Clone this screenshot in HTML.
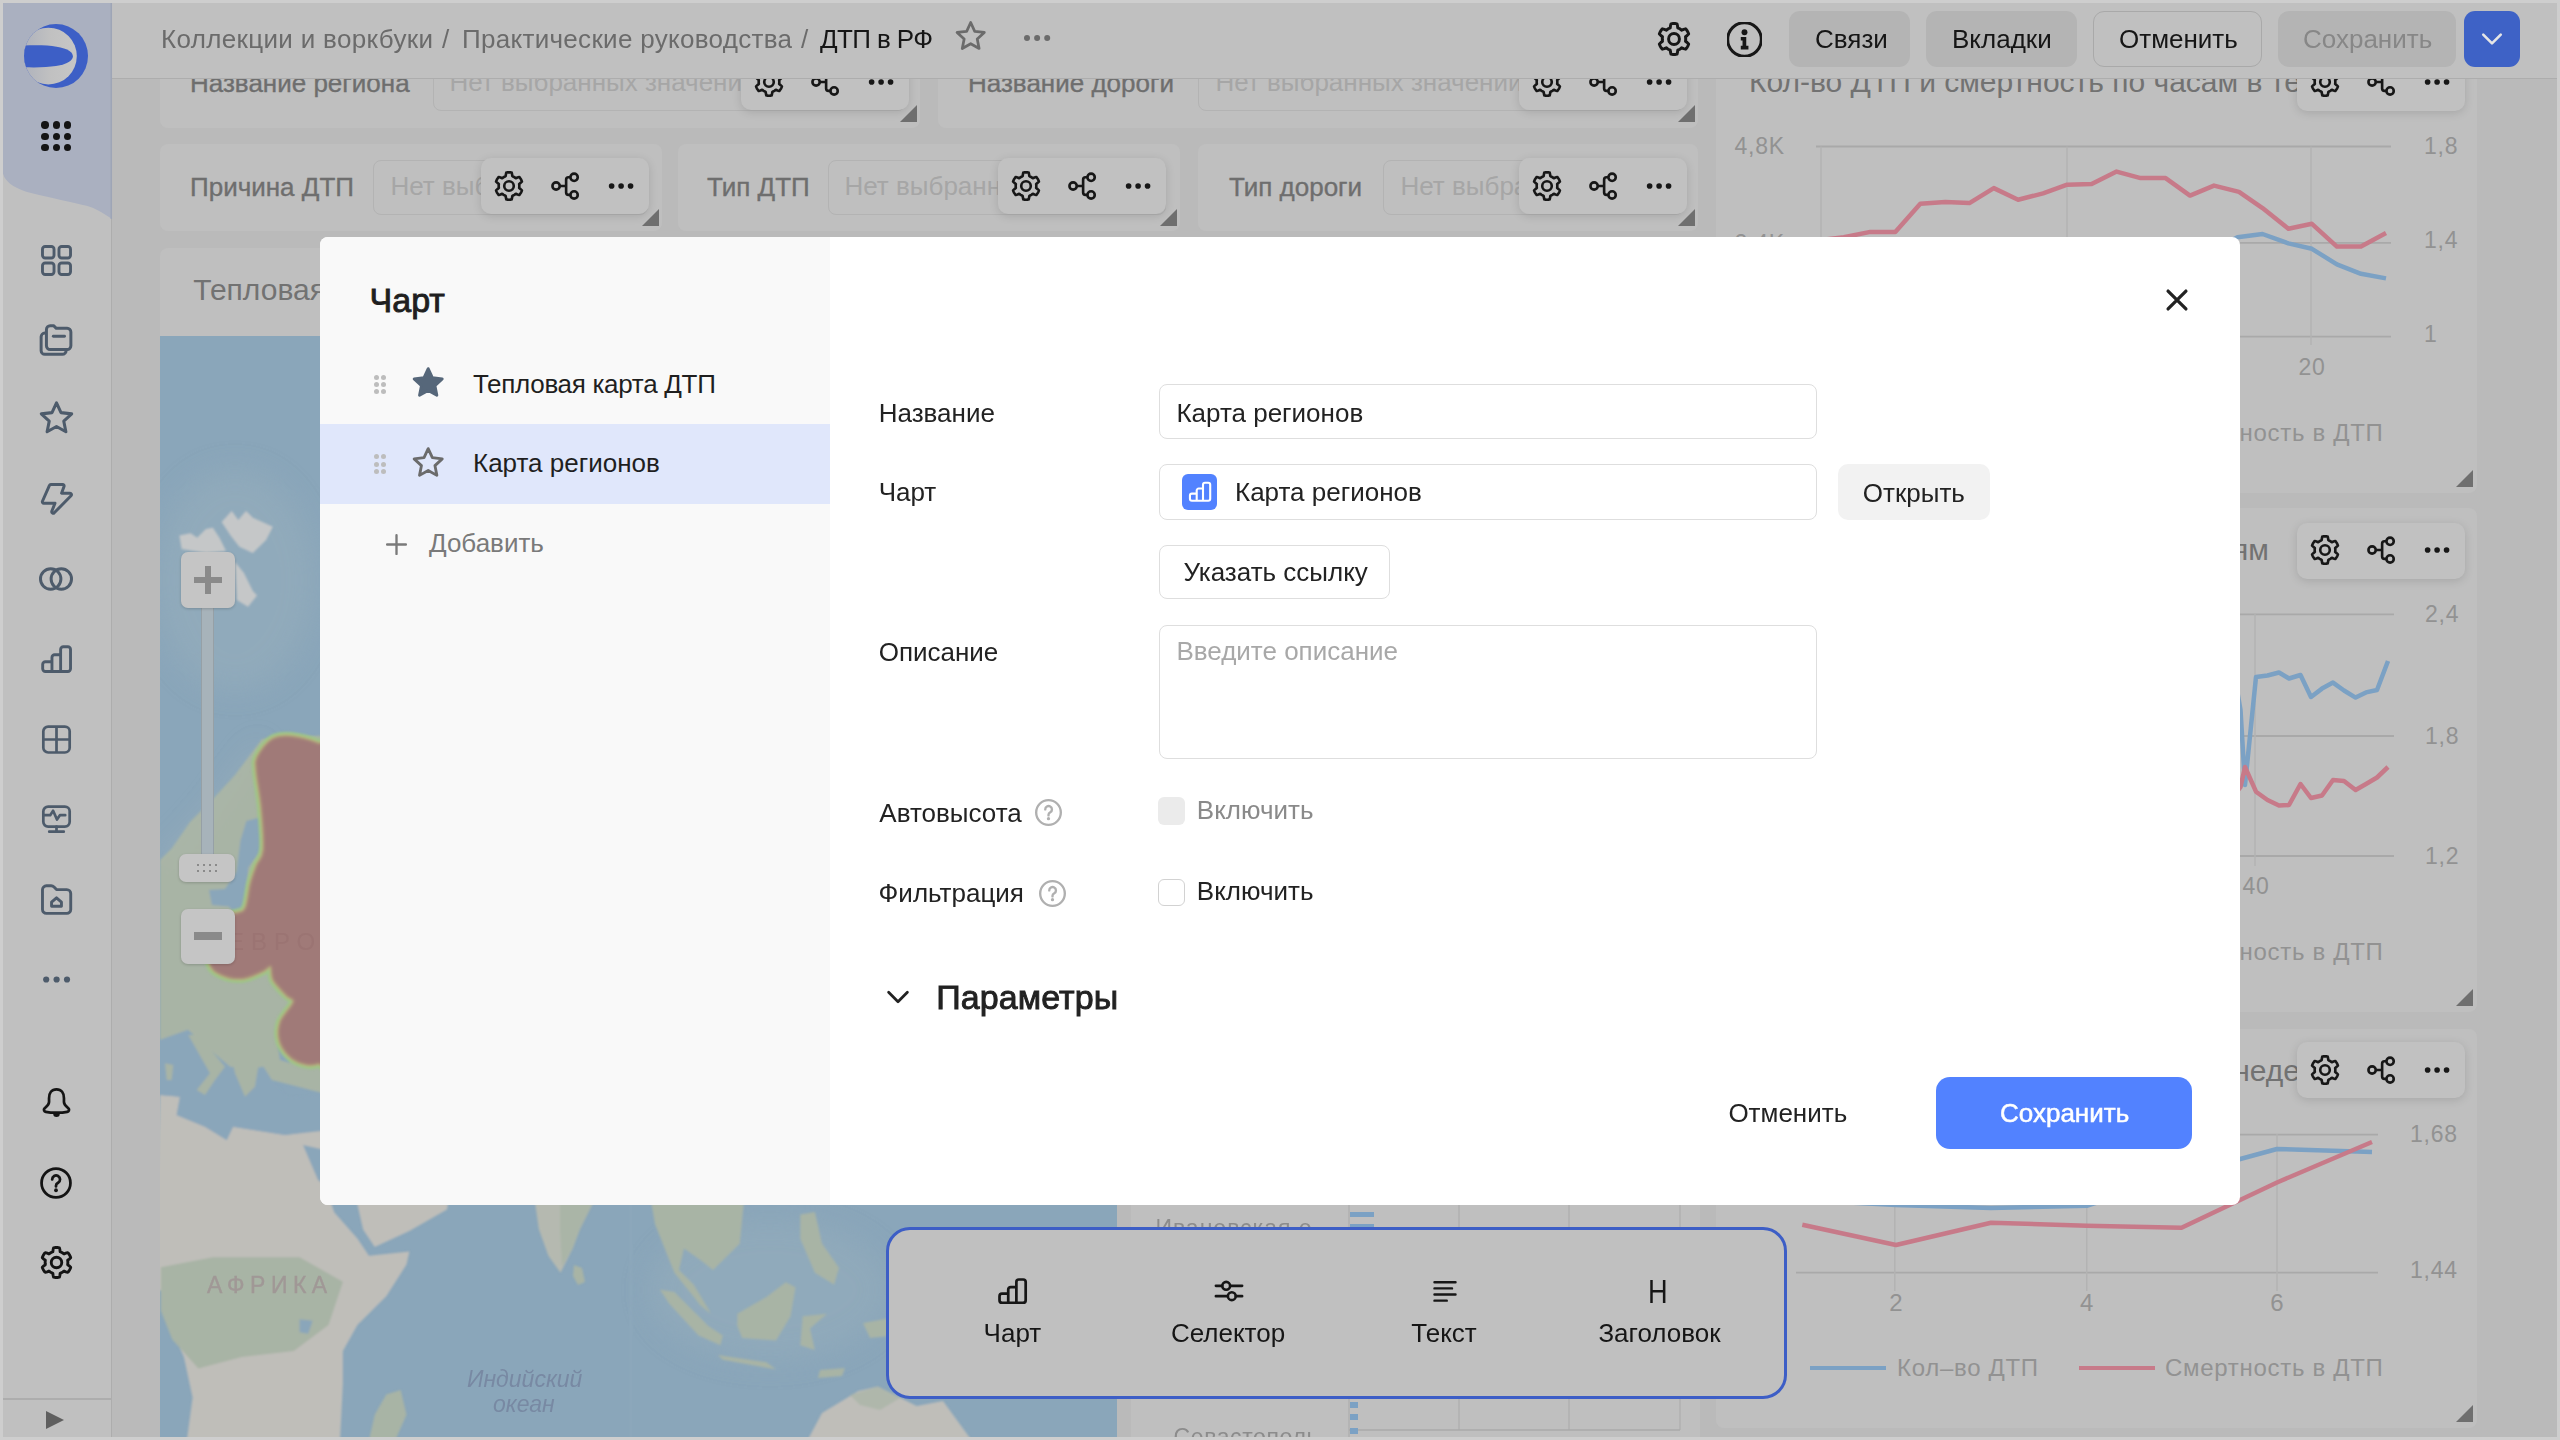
<!DOCTYPE html><html><head><meta charset="utf-8"><style>
*{box-sizing:border-box;margin:0;padding:0}
html,body{width:2560px;height:1440px;overflow:hidden;background:#cecece;font-family:"Liberation Sans",sans-serif}
.abs{position:absolute}
svg{display:block;overflow:visible}
.t{position:absolute;white-space:nowrap;line-height:1}
</style></head><body>
<svg width="0" height="0" style="position:absolute">
<defs>
<symbol id="gear" viewBox="0 0 32 32"><path d="M16.00 1.40 L16.95 1.43 L17.91 1.52 L18.84 1.74 L19.31 3.64 L19.55 5.53 L20.21 5.84 L20.87 6.13 L21.50 6.47 L22.11 6.85 L22.70 7.27 L23.29 7.69 L25.05 6.95 L26.93 6.41 L27.58 7.11 L28.14 7.89 L28.64 8.70 L29.09 9.54 L29.49 10.41 L29.77 11.33 L28.36 12.69 L26.84 13.84 L26.91 14.56 L26.98 15.28 L27.00 16.00 L26.98 16.72 L26.91 17.44 L26.84 18.16 L28.36 19.31 L29.77 20.67 L29.49 21.59 L29.09 22.46 L28.64 23.30 L28.14 24.11 L27.58 24.89 L26.93 25.59 L25.05 25.05 L23.29 24.31 L22.70 24.73 L22.11 25.15 L21.50 25.53 L20.87 25.87 L20.21 26.16 L19.55 26.47 L19.31 28.36 L18.84 30.26 L17.91 30.48 L16.95 30.57 L16.00 30.60 L15.05 30.57 L14.09 30.48 L13.16 30.26 L12.69 28.36 L12.45 26.47 L11.79 26.16 L11.13 25.87 L10.50 25.53 L9.89 25.15 L9.30 24.73 L8.71 24.31 L6.95 25.05 L5.07 25.59 L4.42 24.89 L3.86 24.11 L3.36 23.30 L2.91 22.46 L2.51 21.59 L2.23 20.67 L3.64 19.31 L5.16 18.16 L5.09 17.44 L5.02 16.72 L5.00 16.00 L5.02 15.28 L5.09 14.56 L5.16 13.84 L3.64 12.69 L2.23 11.33 L2.51 10.41 L2.91 9.54 L3.36 8.70 L3.86 7.89 L4.42 7.11 L5.07 6.41 L6.95 6.95 L8.71 7.69 L9.30 7.27 L9.89 6.85 L10.50 6.47 L11.13 6.13 L11.79 5.84 L12.45 5.53 L12.69 3.64 L13.16 1.74 L14.09 1.52 L15.05 1.43Z" fill="none" stroke="currentColor" stroke-width="2.8" stroke-linejoin="round"/><circle cx="16" cy="16" r="5.1" fill="none" stroke="currentColor" stroke-width="2.8"/></symbol>
<symbol id="share" viewBox="0 0 32 32"><circle cx="6.5" cy="16" r="3.9" fill="none" stroke="currentColor" stroke-width="2.8"/><circle cx="25.7" cy="6.7" r="3.9" fill="none" stroke="currentColor" stroke-width="2.8"/><circle cx="25.7" cy="25.5" r="3.9" fill="none" stroke="currentColor" stroke-width="2.8"/><path d="M10.4 16H17.2M21.8 6.7H19.7a2.5 2.5 0 0 0-2.5 2.5V23a2.5 2.5 0 0 0 2.5 2.5H21.8" fill="none" stroke="currentColor" stroke-width="2.8"/></symbol>
<symbol id="dots" viewBox="0 0 32 32"><circle cx="6" cy="16" r="3" fill="currentColor"/><circle cx="16.1" cy="16" r="3" fill="currentColor"/><circle cx="26.2" cy="16" r="3" fill="currentColor"/></symbol>
<symbol id="star" viewBox="0 0 32 32"><path d="M16.00 2.60 L20.11 11.54 L29.89 12.69 L22.66 19.36 L24.58 29.01 L16.00 24.20 L7.42 29.01 L9.34 19.36 L2.11 12.69 L11.89 11.54Z" fill="none" stroke="currentColor" stroke-width="2.8" stroke-linejoin="round"/></symbol>
<symbol id="starf" viewBox="0 0 32 32"><path d="M16.00 2.60 L20.11 11.54 L29.89 12.69 L22.66 19.36 L24.58 29.01 L16.00 24.20 L7.42 29.01 L9.34 19.36 L2.11 12.69 L11.89 11.54Z" fill="currentColor" stroke="currentColor" stroke-width="2.8" stroke-linejoin="round"/></symbol>
<symbol id="info" viewBox="0 0 32 32"><circle cx="16" cy="16" r="15.4" fill="none" stroke="currentColor" stroke-width="2.8"/><circle cx="16" cy="9.3" r="2.7" fill="currentColor"/><path d="M12.6 13.6H17.6V21.8H19.6V25.2H12.6V21.8H14.2V16.9H12.6Z" fill="currentColor"/></symbol>
<symbol id="chev" viewBox="0 0 32 32"><path d="M6 11L16 21L26 11" fill="none" stroke="currentColor" stroke-width="3" stroke-linecap="round" stroke-linejoin="round"/></symbol>
<symbol id="close" viewBox="0 0 32 32"><path d="M5 5L27 27M27 5L5 27" fill="none" stroke="currentColor" stroke-width="4" stroke-linecap="round"/></symbol>
<symbol id="plus" viewBox="0 0 32 32"><path d="M16 4V28M4 16H28" fill="none" stroke="currentColor" stroke-width="3" stroke-linecap="round"/></symbol>
<symbol id="help" viewBox="0 0 32 32"><circle cx="16" cy="16" r="13.6" fill="none" stroke="currentColor" stroke-width="2.6"/><path d="M12.4 12.6a3.7 3.7 0 1 1 5.6 3.2c-1.2.7-2 1.4-2 2.8v.6" fill="none" stroke="currentColor" stroke-width="2.6" stroke-linecap="round"/><circle cx="16" cy="22.8" r="1.8" fill="currentColor"/></symbol>
<symbol id="grid4" viewBox="0 0 32 32"><rect x="2.4" y="2.4" width="11.2" height="11.2" rx="2.6" fill="none" stroke="currentColor" stroke-width="2.8"/><rect x="18.4" y="2.4" width="11.2" height="11.2" rx="2.6" fill="none" stroke="currentColor" stroke-width="2.8"/><rect x="2.4" y="18.4" width="11.2" height="11.2" rx="2.6" fill="none" stroke="currentColor" stroke-width="2.8"/><rect x="18.4" y="18.4" width="11.2" height="11.2" rx="2.6" fill="none" stroke="currentColor" stroke-width="2.8"/></symbol>
<symbol id="folders" viewBox="0 0 32 32"><path d="M7 9.5H5.5a3.5 3.5 0 0 0-3.5 3.5V26a3.5 3.5 0 0 0 3.5 3.5H22a3.5 3.5 0 0 0 3.5-3.5V25" fill="none" stroke="currentColor" stroke-width="2.8" stroke-linejoin="round"/><path d="M7 6a3.5 3.5 0 0 1 3.5-3.5h3.2l2.6 2.5H26.5a3.5 3.5 0 0 1 3.5 3.5V21.5a3.5 3.5 0 0 1-3.5 3.5H10.5A3.5 3.5 0 0 1 7 21.5Z" fill="none" stroke="currentColor" stroke-width="2.8" stroke-linejoin="round"/><path d="M13.5 12.5H24" stroke="currentColor" stroke-width="2.8" stroke-linecap="round"/></symbol>
<symbol id="bolt" viewBox="0 0 32 32"><path d="M10.2 2.3H21.3a1.4 1.4 0 0 1 1.3 1.9L20.3 10.5H28.2a1.4 1.4 0 0 1 1 2.4L13.4 29a1.4 1.4 0 0 1-2.3-1.4L14.1 20H3.6a1.4 1.4 0 0 1-1.3-1.9L8.9 3.2a1.4 1.4 0 0 1 1.3-.9Z" fill="none" stroke="currentColor" stroke-width="2.8" stroke-linejoin="round"/></symbol>
<symbol id="circles" viewBox="0 0 32 32"><circle cx="11" cy="16" r="9.6" fill="none" stroke="currentColor" stroke-width="2.8"/><circle cx="21" cy="16" r="9.6" fill="none" stroke="currentColor" stroke-width="2.8"/></symbol>
<symbol id="bars" viewBox="0 0 32 32"><path d="M5.2 27.6H27a2.6 2.6 0 0 0 2.6-2.6V6.2a2.6 2.6 0 0 0-2.6-2.6H22.6a2.6 2.6 0 0 0-2.6 2.6V11.4H14.2a2.6 2.6 0 0 0-2.6 2.6V18.2H5.2a2.6 2.6 0 0 0-2.6 2.6V25a2.6 2.6 0 0 0 2.6 2.6Z M11.6 18.2V27.6 M20 11.4V27.6" fill="none" stroke="currentColor" stroke-width="2.8" stroke-linejoin="round"/></symbol>
<symbol id="table" viewBox="0 0 32 32"><rect x="2.4" y="2.6" width="27.2" height="26.8" rx="5" fill="none" stroke="currentColor" stroke-width="2.8"/><path d="M2.4 16H29.6M16 2.6V29.4" stroke="currentColor" stroke-width="2.8"/></symbol>
<symbol id="monitor" viewBox="0 0 32 32"><rect x="2.4" y="2.6" width="27.2" height="20.8" rx="5" fill="none" stroke="currentColor" stroke-width="2.8"/><path d="M3 11.5H9.5L12.5 7L16.5 16L19.5 11.5H25" fill="none" stroke="currentColor" stroke-width="2.8" stroke-linejoin="round" stroke-linecap="round"/><path d="M16 23.4V28.2M8.5 28.6H23.5" stroke="currentColor" stroke-width="2.8" stroke-linecap="round"/></symbol>
<symbol id="folderhome" viewBox="0 0 32 32"><path d="M2.4 6.5a3.8 3.8 0 0 1 3.8-3.8H10.8a4 4 0 0 1 2.8 1.2L16 6.4H26a3.8 3.8 0 0 1 3.8 3.8V25.7a3.8 3.8 0 0 1-3.8 3.8H6.2a3.8 3.8 0 0 1-3.8-3.8Z" fill="none" stroke="currentColor" stroke-width="2.8" stroke-linejoin="round"/><path d="M11.2 22.6V18.6L16 14.4L20.8 18.6V22.6Z" fill="none" stroke="currentColor" stroke-width="2.8" stroke-linejoin="round"/></symbol>
<symbol id="bell" viewBox="0 0 32 32"><path d="M16 2.5C10.8 2.5 8.3 6.3 8.3 11.5V15.5C8.3 18.5 6 20 3.6 22.2C2.4 23.4 3.2 25.3 4.9 25.6C8.4 26.3 12 26.5 16 26.5S23.6 26.3 27.1 25.6C28.8 25.3 29.6 23.4 28.4 22.2C26 20 23.7 18.5 23.7 15.5V11.5C23.7 6.3 21.2 2.5 16 2.5Z" fill="none" stroke="currentColor" stroke-width="2.8" stroke-linejoin="round"/><path d="M12.6 27.5a3.4 3.4 0 0 0 6.8 0Z" fill="currentColor"/></symbol>
<symbol id="sliders" viewBox="0 0 32 32"><path d="M2 10.5H8.8M17.2 10.5H30M2 21.5H14.8M23.2 21.5H30" stroke="currentColor" stroke-width="2.8" stroke-linecap="round"/><circle cx="13" cy="10.5" r="4.2" fill="none" stroke="currentColor" stroke-width="2.8"/><circle cx="19" cy="21.5" r="4.2" fill="none" stroke="currentColor" stroke-width="2.8"/></symbol>
<symbol id="lines" viewBox="0 0 32 32"><path d="M4 6H28M4 13H24M4 20H28M4 27H18" stroke="currentColor" stroke-width="2.8" stroke-linecap="round"/></symbol>
<symbol id="drag" viewBox="0 0 32 32"><circle cx="10" cy="5" r="2.6" fill="currentColor"/><circle cx="22" cy="5" r="2.6" fill="currentColor"/><circle cx="10" cy="16" r="2.6" fill="currentColor"/><circle cx="22" cy="16" r="2.6" fill="currentColor"/><circle cx="10" cy="27" r="2.6" fill="currentColor"/><circle cx="22" cy="27" r="2.6" fill="currentColor"/></symbol>
</defs></svg>
<div class="abs" style="left:3px;top:3px;width:2554px;height:1434px;background:#bababa"></div>
<div class="abs" style="left:160px;top:40px;width:760px;height:88px;background:#bfbfbf;border-radius:8px"></div>
<div class="t" style="left:190.0px;top:69.9px;font-size:26px;color:#6e6e6e;font-weight:400;-webkit-text-stroke:0.35px #6e6e6e">Название региона</div>
<div class="abs" style="left:433px;top:56px;width:473px;height:55px;border:1.5px solid #b3b3b3;border-radius:8px;overflow:hidden"><div class="t" style="left:15.5px;top:12.4px;font-size:26px;color:#a6a6a6">Нет выбранных значений</div></div>
<div class="abs" style="left:741px;top:54px;width:168px;height:56px;background:#c1c1c1;border-radius:10px;box-shadow:0 2px 10px rgba(0,0,0,0.13)"></div>
<svg class="abs" style="left:754.0px;top:66.5px;width:30px;height:30px;color:#171717" viewBox="0 0 32 32"><use href="#gear"/></svg>
<svg class="abs" style="left:810.0px;top:66.5px;width:30px;height:30px;color:#171717" viewBox="0 0 32 32"><use href="#share"/></svg>
<svg class="abs" style="left:866.0px;top:66.5px;width:30px;height:30px;color:#171717" viewBox="0 0 32 32"><use href="#dots"/></svg>
<svg class="abs" style="left:900px;top:105px;width:17px;height:17px" viewBox="0 0 17 17"><path d="M17 0V17H0Z" fill="#6f6f6f"/></svg>
<div class="abs" style="left:938px;top:40px;width:760px;height:88px;background:#bfbfbf;border-radius:8px"></div>
<div class="t" style="left:968.0px;top:69.9px;font-size:26px;color:#6e6e6e;font-weight:400;-webkit-text-stroke:0.35px #6e6e6e">Название дороги</div>
<div class="abs" style="left:1198px;top:56px;width:486px;height:55px;border:1.5px solid #b3b3b3;border-radius:8px;overflow:hidden"><div class="t" style="left:16.5px;top:12.4px;font-size:26px;color:#a6a6a6">Нет выбранных значений</div></div>
<div class="abs" style="left:1519px;top:54px;width:168px;height:56px;background:#c1c1c1;border-radius:10px;box-shadow:0 2px 10px rgba(0,0,0,0.13)"></div>
<svg class="abs" style="left:1532.0px;top:66.5px;width:30px;height:30px;color:#171717" viewBox="0 0 32 32"><use href="#gear"/></svg>
<svg class="abs" style="left:1588.0px;top:66.5px;width:30px;height:30px;color:#171717" viewBox="0 0 32 32"><use href="#share"/></svg>
<svg class="abs" style="left:1644.0px;top:66.5px;width:30px;height:30px;color:#171717" viewBox="0 0 32 32"><use href="#dots"/></svg>
<svg class="abs" style="left:1678px;top:105px;width:17px;height:17px" viewBox="0 0 17 17"><path d="M17 0V17H0Z" fill="#6f6f6f"/></svg>
<div class="abs" style="left:160px;top:144px;width:502px;height:87px;background:#bfbfbf;border-radius:8px"></div>
<div class="t" style="left:190.0px;top:173.9px;font-size:26px;color:#6e6e6e;font-weight:400;-webkit-text-stroke:0.35px #6e6e6e">Причина ДТП</div>
<div class="abs" style="left:373px;top:160px;width:275px;height:55px;border:1.5px solid #b3b3b3;border-radius:8px;overflow:hidden"><div class="t" style="left:16.5px;top:12.4px;font-size:26px;color:#a6a6a6">Нет выбранных значений</div></div>
<div class="abs" style="left:481px;top:158px;width:168px;height:56px;background:#c1c1c1;border-radius:10px;box-shadow:0 2px 10px rgba(0,0,0,0.13)"></div>
<svg class="abs" style="left:494.0px;top:170.5px;width:30px;height:30px;color:#171717" viewBox="0 0 32 32"><use href="#gear"/></svg>
<svg class="abs" style="left:550.0px;top:170.5px;width:30px;height:30px;color:#171717" viewBox="0 0 32 32"><use href="#share"/></svg>
<svg class="abs" style="left:606.0px;top:170.5px;width:30px;height:30px;color:#171717" viewBox="0 0 32 32"><use href="#dots"/></svg>
<svg class="abs" style="left:642px;top:209px;width:17px;height:17px" viewBox="0 0 17 17"><path d="M17 0V17H0Z" fill="#6f6f6f"/></svg>
<div class="abs" style="left:678px;top:144px;width:502px;height:87px;background:#bfbfbf;border-radius:8px"></div>
<div class="t" style="left:707.0px;top:173.9px;font-size:26px;color:#6e6e6e;font-weight:400;-webkit-text-stroke:0.35px #6e6e6e">Тип ДТП</div>
<div class="abs" style="left:828px;top:160px;width:338px;height:55px;border:1.5px solid #b3b3b3;border-radius:8px;overflow:hidden"><div class="t" style="left:15.5px;top:12.4px;font-size:26px;color:#a6a6a6">Нет выбранных значений</div></div>
<div class="abs" style="left:998px;top:158px;width:168px;height:56px;background:#c1c1c1;border-radius:10px;box-shadow:0 2px 10px rgba(0,0,0,0.13)"></div>
<svg class="abs" style="left:1011.0px;top:170.5px;width:30px;height:30px;color:#171717" viewBox="0 0 32 32"><use href="#gear"/></svg>
<svg class="abs" style="left:1067.0px;top:170.5px;width:30px;height:30px;color:#171717" viewBox="0 0 32 32"><use href="#share"/></svg>
<svg class="abs" style="left:1123.0px;top:170.5px;width:30px;height:30px;color:#171717" viewBox="0 0 32 32"><use href="#dots"/></svg>
<svg class="abs" style="left:1160px;top:209px;width:17px;height:17px" viewBox="0 0 17 17"><path d="M17 0V17H0Z" fill="#6f6f6f"/></svg>
<div class="abs" style="left:1198px;top:144px;width:500px;height:87px;background:#bfbfbf;border-radius:8px"></div>
<div class="t" style="left:1229.0px;top:173.9px;font-size:26px;color:#6e6e6e;font-weight:400;-webkit-text-stroke:0.35px #6e6e6e">Тип дороги</div>
<div class="abs" style="left:1383px;top:160px;width:301px;height:55px;border:1.5px solid #b3b3b3;border-radius:8px;overflow:hidden"><div class="t" style="left:16.5px;top:12.4px;font-size:26px;color:#a6a6a6">Нет выбранных значений</div></div>
<div class="abs" style="left:1519px;top:158px;width:168px;height:56px;background:#c1c1c1;border-radius:10px;box-shadow:0 2px 10px rgba(0,0,0,0.13)"></div>
<svg class="abs" style="left:1532.0px;top:170.5px;width:30px;height:30px;color:#171717" viewBox="0 0 32 32"><use href="#gear"/></svg>
<svg class="abs" style="left:1588.0px;top:170.5px;width:30px;height:30px;color:#171717" viewBox="0 0 32 32"><use href="#share"/></svg>
<svg class="abs" style="left:1644.0px;top:170.5px;width:30px;height:30px;color:#171717" viewBox="0 0 32 32"><use href="#dots"/></svg>
<svg class="abs" style="left:1678px;top:209px;width:17px;height:17px" viewBox="0 0 17 17"><path d="M17 0V17H0Z" fill="#6f6f6f"/></svg>
<div class="abs" style="left:1716px;top:40px;width:761px;height:453px;background:#bfbfbf;border-radius:8px"></div>
<svg class="abs" style="left:2456px;top:470px;width:17px;height:17px" viewBox="0 0 17 17"><path d="M17 0V17H0Z" fill="#6f6f6f"/></svg>
<div class="t" style="left:1749.0px;top:67.0px;font-size:30px;color:#727272;font-weight:400;">Кол-во ДТП и смертность по часам в течение суток</div>
<div class="abs" style="left:2297px;top:54.6px;width:168px;height:55.99999999999999px;background:#c1c1c1;border-radius:10px;box-shadow:0 2px 10px rgba(0,0,0,0.13)"></div>
<svg class="abs" style="left:2310.0px;top:67.1px;width:30px;height:30px;color:#171717" viewBox="0 0 32 32"><use href="#gear"/></svg>
<svg class="abs" style="left:2366.0px;top:67.1px;width:30px;height:30px;color:#171717" viewBox="0 0 32 32"><use href="#share"/></svg>
<svg class="abs" style="left:2422.0px;top:67.1px;width:30px;height:30px;color:#171717" viewBox="0 0 32 32"><use href="#dots"/></svg>
<div class="abs" style="left:1716px;top:508px;width:761px;height:504px;background:#bfbfbf;border-radius:8px"></div>
<svg class="abs" style="left:2456px;top:989px;width:17px;height:17px" viewBox="0 0 17 17"><path d="M17 0V17H0Z" fill="#6f6f6f"/></svg>
<div class="t" style="right:291.0px;top:534.5px;font-size:30px;color:#727272;font-weight:400;">Кол-во ДТП и смертность по дням</div>
<div class="abs" style="left:1716px;top:1029px;width:761px;height:399px;background:#bfbfbf;border-radius:8px"></div>
<svg class="abs" style="left:2456px;top:1405px;width:17px;height:17px" viewBox="0 0 17 17"><path d="M17 0V17H0Z" fill="#6f6f6f"/></svg>
<div class="t" style="right:260.0px;top:1055.5px;font-size:30px;color:#727272;font-weight:400;">Кол-во ДТП и смертность по дням неде</div>
<svg class="abs" style="left:0;top:0;width:2560px;height:1440px" viewBox="0 0 2560 1440">
<path d="M1816 146.5H2391" stroke="#a9a9a9" stroke-width="1.8"/>
<path d="M1816 242.8H2391" stroke="#a9a9a9" stroke-width="1.8"/>
<path d="M1816 336.6H2391" stroke="#a9a9a9" stroke-width="1.8"/>
<path d="M1821 146.5V345" stroke="#b3b3b3" stroke-width="1.5"/>
<path d="M2067 146.5V345" stroke="#b3b3b3" stroke-width="1.5"/>
<path d="M2311 146.5V345" stroke="#b3b3b3" stroke-width="1.5"/>
<path d="M2213.0 250.0 L2237.5 237.2 L2262.5 234.0 L2288.4 243.4 L2311.9 248.8 L2336.9 264.4 L2361.0 273.8 L2386.0 278.4" fill="none" stroke="#7ba1c4" stroke-width="4.5" stroke-linejoin="round"/>
<path d="M1821.0 240.0 L1843.8 237.2 L1870.3 231.9 L1895.3 231.9 L1920.3 203.8 L1945.3 201.9 L1969.4 203.1 L1993.8 188.1 L2018.1 199.7 L2043.1 193.4 L2067.2 184.7 L2091.6 184.1 L2116.6 171.6 L2140.6 178.1 L2165.6 178.1 L2190.0 195.6 L2214.0 185.6 L2239.0 191.9 L2262.5 208.1 L2288.4 228.8 L2311.9 223.8 L2336.9 246.6 L2361.0 246.6 L2386.0 233.1" fill="none" stroke="#c77a89" stroke-width="4.5" stroke-linejoin="round"/>
<path d="M1796 614.4H2394" stroke="#a9a9a9" stroke-width="1.8"/>
<path d="M1796 736H2394" stroke="#a9a9a9" stroke-width="1.8"/>
<path d="M1796 856H2394" stroke="#a9a9a9" stroke-width="1.8"/>
<path d="M2255 614V866" stroke="#b3b3b3" stroke-width="1.5"/>
<path d="M2230.0 650.0 L2240.5 710.0 L2245.0 785.0 L2256.0 677.0 L2267.5 675.5 L2279.0 672.5 L2289.0 678.5 L2300.5 675.0 L2311.0 697.0 L2322.0 688.6 L2333.0 682.6 L2344.0 690.5 L2355.6 697.6 L2366.0 692.4 L2377.0 690.0 L2388.0 661.0" fill="none" stroke="#7ba1c4" stroke-width="4.5" stroke-linejoin="round"/>
<path d="M2230.0 800.0 L2240.5 787.0 L2245.0 767.0 L2256.0 791.7 L2267.5 800.0 L2279.0 805.6 L2289.0 805.0 L2300.5 784.0 L2311.0 798.0 L2322.0 795.5 L2333.0 780.0 L2344.0 781.0 L2355.6 790.0 L2366.0 784.0 L2377.0 777.5 L2388.0 767.0" fill="none" stroke="#c77a89" stroke-width="4.5" stroke-linejoin="round"/>
<path d="M1796 1134.6H2378" stroke="#a9a9a9" stroke-width="1.8"/>
<path d="M1796 1272.6H2378" stroke="#a9a9a9" stroke-width="1.8"/>
<path d="M1894.8 1134V1291" stroke="#b3b3b3" stroke-width="1.5"/>
<path d="M2086.7 1134V1291" stroke="#b3b3b3" stroke-width="1.5"/>
<path d="M2277 1134V1291" stroke="#b3b3b3" stroke-width="1.5"/>
<path d="M1802.0 1200.0 L1896.0 1205.0 L1991.0 1208.0 L2086.7 1205.8 L2181.5 1175.0 L2277.0 1149.0 L2372.0 1152.0" fill="none" stroke="#7ba1c4" stroke-width="4.5" stroke-linejoin="round"/>
<path d="M1802.3 1224.8 L1896.0 1245.0 L1991.0 1222.7 L2086.7 1225.7 L2181.5 1227.7 L2277.0 1182.5 L2372.0 1142.0" fill="none" stroke="#c77a89" stroke-width="4.5" stroke-linejoin="round"/>
</svg>
<div class="abs" style="left:2297px;top:522.5px;width:168px;height:56.0px;background:#c1c1c1;border-radius:10px;box-shadow:0 2px 10px rgba(0,0,0,0.13)"></div>
<svg class="abs" style="left:2310.0px;top:535.0px;width:30px;height:30px;color:#171717" viewBox="0 0 32 32"><use href="#gear"/></svg>
<svg class="abs" style="left:2366.0px;top:535.0px;width:30px;height:30px;color:#171717" viewBox="0 0 32 32"><use href="#share"/></svg>
<svg class="abs" style="left:2422.0px;top:535.0px;width:30px;height:30px;color:#171717" viewBox="0 0 32 32"><use href="#dots"/></svg>
<div class="abs" style="left:2297px;top:1042px;width:168px;height:56px;background:#c1c1c1;border-radius:10px;box-shadow:0 2px 10px rgba(0,0,0,0.13)"></div>
<svg class="abs" style="left:2310.0px;top:1054.5px;width:30px;height:30px;color:#171717" viewBox="0 0 32 32"><use href="#gear"/></svg>
<svg class="abs" style="left:2366.0px;top:1054.5px;width:30px;height:30px;color:#171717" viewBox="0 0 32 32"><use href="#share"/></svg>
<svg class="abs" style="left:2422.0px;top:1054.5px;width:30px;height:30px;color:#171717" viewBox="0 0 32 32"><use href="#dots"/></svg>
<div class="t" style="right:775.0px;top:135.2px;font-size:23px;color:#929292;font-weight:400;letter-spacing:0.8px">4,8K</div>
<div class="t" style="right:775.0px;top:231.6px;font-size:23px;color:#929292;font-weight:400;letter-spacing:0.8px">2,4K</div>
<div class="t" style="left:2424.0px;top:135.2px;font-size:23px;color:#929292;font-weight:400;letter-spacing:0.8px">1,8</div>
<div class="t" style="left:2424.0px;top:228.8px;font-size:23px;color:#929292;font-weight:400;letter-spacing:0.8px">1,4</div>
<div class="t" style="left:2424.0px;top:322.8px;font-size:23px;color:#929292;font-weight:400;letter-spacing:0.8px">1</div>
<div class="t" style="left:2012.0px;width:600px;text-align:center;top:355.9px;font-size:23px;color:#929292;font-weight:400;letter-spacing:0.8px">20</div>
<div class="abs" style="left:1810px;top:430.5px;width:76px;height:4.0px;background:#7ba1c4"></div>
<div class="t" style="left:1897.0px;top:420.6px;font-size:24px;color:#929292;font-weight:400;letter-spacing:0.7px">Кол–во ДТП</div>
<div class="abs" style="left:2079px;top:430.5px;width:76px;height:4.0px;background:#c77a89"></div>
<div class="t" style="left:2165.0px;top:420.6px;font-size:24px;color:#929292;font-weight:400;letter-spacing:0.7px">Смертность в ДТП</div>
<div class="t" style="left:2425.0px;top:603.1px;font-size:23px;color:#929292;font-weight:400;letter-spacing:0.8px">2,4</div>
<div class="t" style="left:2425.0px;top:724.8px;font-size:23px;color:#929292;font-weight:400;letter-spacing:0.8px">1,8</div>
<div class="t" style="left:2425.0px;top:844.8px;font-size:23px;color:#929292;font-weight:400;letter-spacing:0.8px">1,2</div>
<div class="t" style="left:1956.0px;width:600px;text-align:center;top:875.0px;font-size:23px;color:#929292;font-weight:400;letter-spacing:0.8px">40</div>
<div class="abs" style="left:1810px;top:949.5px;width:76px;height:4.0px;background:#7ba1c4"></div>
<div class="t" style="left:1897.0px;top:939.6px;font-size:24px;color:#929292;font-weight:400;letter-spacing:0.7px">Кол–во ДТП</div>
<div class="abs" style="left:2079px;top:949.5px;width:76px;height:4.0px;background:#c77a89"></div>
<div class="t" style="left:2165.0px;top:939.6px;font-size:24px;color:#929292;font-weight:400;letter-spacing:0.7px">Смертность в ДТП</div>
<div class="t" style="left:2410.0px;top:1123.3px;font-size:23px;color:#929292;font-weight:400;letter-spacing:0.8px">1,68</div>
<div class="t" style="left:2410.0px;top:1258.8px;font-size:23px;color:#929292;font-weight:400;letter-spacing:0.8px">1,44</div>
<div class="t" style="left:1596.0px;width:600px;text-align:center;top:1290.6px;font-size:24px;color:#929292;font-weight:400;">2</div>
<div class="t" style="left:1786.7px;width:600px;text-align:center;top:1290.6px;font-size:24px;color:#929292;font-weight:400;">4</div>
<div class="t" style="left:1977.0px;width:600px;text-align:center;top:1290.6px;font-size:24px;color:#929292;font-weight:400;">6</div>
<div class="abs" style="left:1810px;top:1365.5px;width:76px;height:4.0px;background:#7ba1c4"></div>
<div class="t" style="left:1897.0px;top:1355.6px;font-size:24px;color:#929292;font-weight:400;letter-spacing:0.7px">Кол–во ДТП</div>
<div class="abs" style="left:2079px;top:1365.5px;width:76px;height:4.0px;background:#c77a89"></div>
<div class="t" style="left:2165.0px;top:1355.6px;font-size:24px;color:#929292;font-weight:400;letter-spacing:0.7px">Смертность в ДТП</div>
<div class="abs" style="left:160px;top:248px;width:957px;height:1212px;background:#bfbfbf;border-radius:8px"></div>
<div class="t" style="left:193.3px;top:274.9px;font-size:30px;color:#727272;font-weight:400;">Тепловая карта ДТП</div>
<div class="abs" style="left:160px;top:336px;width:957px;height:1101px;overflow:hidden">
<svg class="abs" style="left:-160px;top:-336px;width:2560px;height:1440px" viewBox="0 0 2560 1440">
<defs><filter id="bl" x="-5%" y="-5%" width="110%" height="110%"><feGaussianBlur stdDeviation="0.9"/></filter>
<filter id="bl2" x="-60%" y="-60%" width="220%" height="220%"><feGaussianBlur stdDeviation="14"/></filter></defs>
<rect x="0" y="0" width="2560" height="1440" fill="#8aa6ba"/>
<g filter="url(#bl)">
<ellipse cx="235" cy="580" rx="80" ry="110" fill="#95adbc" opacity="0.6" filter="url(#bl2)"/>
<path d="M221.7 522.0 L231.7 511.0 L238.3 520.0 L246.0 511.0 L252.8 517.8 L272.8 526.7 L266.0 540.0 L252.8 553.0 L239.4 546.7 L230.6 535.6Z" fill="#c5c7c8"/>
<path d="M179.4 535.6 L190.6 533.3 L197.2 537.8 L206.0 528.9 L212.8 527.8 L219.4 537.8 L226.0 551.0 L206.0 553.0 L181.7 549.0Z" fill="#c5c7c8"/>
<path d="M235.0 562.0 L243.9 573.0 L252.8 591.0 L257.0 595.6 L248.0 606.7 L237.0 600.0Z" fill="#c5c7c8"/>
<path d="M262.0 739.0 L330.0 735.0 L330.0 1095.0 L271.7 1080.0 L263.3 1066.7 L248.3 1070.0 L230.0 1066.7 L210.0 1050.0 L188.0 1030.0 L160.0 1040.0 L160.0 860.0 L172.0 848.0 L190.0 822.0 L212.0 800.0 L235.0 775.0 L250.0 755.0Z" fill="#a8b4a5"/>
<path d="M260.0 739.4 L263.9 745.3 L248.3 770.5 L228.9 797.8 L205.5 828.9 L193.9 840.5 L178.3 860.0 L166.7 867.7 L162.8 856.1 L184.2 836.6 L213.3 803.6 L236.6 770.5Z" fill="#b6bdb7" opacity="0.35" filter="url(#bl2)"/>
<path d="M246.4 821.0 L262.0 817.0 L263.9 828.9 L260.0 852.0 L248.3 867.7 L246.4 895.0 L248.3 914.4 L236.6 916.3 L228.9 906.6 L212.0 905.0 L209.0 890.0 L225.0 889.0 L236.6 871.6 L240.5 840.5Z" fill="#8aa6ba"/>
<path d="M278.0 1046.0 L292.0 1050.0 L290.0 1063.0 L280.0 1060.0Z" fill="#8aa6ba"/>
<path d="M160.0 1095.0 L180.0 1096.7 L176.7 1115.0 L205.0 1126.7 L226.7 1140.0 L233.0 1126.7 L285.0 1135.0 L320.0 1130.0 L340.0 1130.0 L328.5 1195.0 L334.2 1212.3 L357.4 1238.4 L368.9 1255.7 L409.4 1251.4 L406.5 1264.4 L386.3 1296.2 L357.4 1325.1 L342.9 1351.1 L342.9 1382.9 L340.0 1440.7 L186.8 1440.7 L192.6 1397.4 L183.9 1356.9 L169.5 1325.1 L172.3 1299.1 L160.2 1290.4 L155.0 1290.4Z" fill="#bfbeb9"/>
<path d="M160.0 1040.0 L188.0 1030.0 L210.0 1050.0 L230.0 1066.7 L248.3 1070.0 L263.3 1066.7 L271.7 1080.0 L288.3 1096.7 L330.0 1095.0 L330.0 1130.0 L285.0 1135.0 L233.0 1126.7 L226.7 1140.0 L205.0 1126.7 L176.7 1115.0 L180.0 1096.7 L160.0 1095.0Z" fill="#8aa6ba"/>
<path d="M188.3 1035.0 L198.3 1035.0 L225.0 1066.7 L215.0 1080.0 L205.0 1095.0 L196.7 1090.0 L210.0 1073.3Z" fill="#a8b4a5"/>
<path d="M231.7 1058.3 L258.3 1066.7 L255.0 1086.7 L245.0 1096.7 L235.0 1073.3Z" fill="#a8b4a5"/>
<path d="M165.0 1063.3 L173.3 1065.0 L171.7 1080.0 L166.7 1080.0Z" fill="#a8b4a5"/>
<path d="M303.0 1145.0 L325.0 1150.0 L325.0 1185.0 L318.0 1180.0Z" fill="#8aa6ba"/>
<path d="M160.8 1267.3 L212.8 1257.2 L299.6 1257.2 L342.9 1281.7 L328.5 1325.1 L293.8 1351.1 L241.7 1356.9 L198.4 1368.5 L172.3 1339.6 L160.8 1310.6Z" fill="#a8b4a5"/>
<path d="M299.6 1319.3 L312.6 1320.8 L308.2 1333.8 L299.6 1332.3Z" fill="#8aa6ba"/>
<path d="M354.5 1192.1 L449.9 1192.1 L447.0 1209.5 L409.4 1231.1 L374.7 1247.0 L363.2 1229.7Z" fill="#bfbeb9"/>
<path d="M386.3 1394.5 L400.7 1390.1 L406.5 1414.7 L395.0 1440.7 L368.9 1440.7 L374.7 1414.7Z" fill="#a8b4a5"/>
<path d="M534.0 1195.0 L597.0 1195.0 L580.0 1229.0 L572.7 1248.4 L560.5 1272.7 L548.4 1255.7 L538.8 1229.0Z" fill="#b5b9b0"/>
<path d="M560.0 1195.0 L597.0 1195.0 L580.0 1229.0 L572.7 1248.4 L562.0 1266.0 L560.0 1230.0Z" fill="#a8b4a5" opacity="0.8"/>
<path d="M574.0 1265.0 L582.0 1268.0 L585.0 1282.0 L578.0 1285.0 L573.0 1276.0Z" fill="#a8b4a5"/>
<ellipse cx="770" cy="1290" rx="120" ry="70" fill="#95adbc" opacity="0.55" filter="url(#bl2)"/>
<path d="M650.0 1195.0 L744.6 1195.0 L739.8 1243.6 L713.0 1270.0 L701.0 1260.5 L684.0 1248.4 L679.0 1270.0 L693.8 1284.8 L708.3 1309.0 L710.7 1313.8 L700.0 1305.0 L693.8 1296.9 L674.4 1272.7 L655.0 1224.2Z" fill="#a8b4a5"/>
<path d="M659.8 1289.6 L674.4 1292.0 L708.3 1326.0 L722.8 1335.6 L720.4 1345.3 L698.6 1335.6 L669.5 1304.0Z" fill="#a8b4a5"/>
<path d="M718.0 1355.0 L766.4 1362.3 L776.0 1369.5 L722.8 1359.8Z" fill="#a8b4a5"/>
<path d="M737.3 1313.8 L766.4 1296.9 L785.8 1282.3 L795.5 1287.2 L790.6 1316.3 L776.0 1340.5 L742.2 1338.0 L737.3 1326.0Z" fill="#a8b4a5"/>
<path d="M802.7 1316.3 L827.0 1313.8 L810.0 1328.4 L814.9 1350.0 L800.3 1345.3Z" fill="#a8b4a5"/>
<path d="M800.3 1214.5 L814.9 1212.0 L822.0 1243.6 L839.0 1267.8 L834.2 1284.8 L814.9 1272.7 L800.3 1238.8Z" fill="#a8b4a5"/>
<path d="M863.0 1323.0 L890.0 1318.0 L900.0 1335.0 L870.0 1338.0Z" fill="#a8b4a5"/>
<path d="M820.0 1370.0 L845.0 1368.0 L842.0 1376.0 L818.0 1378.0Z" fill="#a8b4a5"/>
<path d="M805.0 1445.0 L822.0 1413.0 L858.4 1391.0 L877.8 1386.5 L916.6 1406.0 L943.0 1401.0 L975.0 1445.0Z" fill="#bfbeb9"/>
<path d="M850.0 1395.0 L877.8 1386.5 L900.0 1398.0 L880.0 1410.0 L860.0 1405.0Z" fill="#a8b4a5" opacity="0.7"/>
<path d="M630.8 1195V1440" stroke="rgba(255,255,255,0.07)" stroke-width="1"/>
</g>
<g filter="url(#bl)"><path d="M258.0 757.0 C260.5 751.7 266.5 743.3 272.0 740.0 C277.5 736.7 283.3 736.3 291.0 737.0 C298.7 737.7 309.0 740.2 318.0 744.0 C327.0 747.8 340.5 709.0 345.0 760.0 C349.5 811.0 349.5 999.5 345.0 1050.0 C340.5 1100.5 325.0 1060.8 318.0 1063.0 C311.0 1065.2 307.8 1064.3 303.0 1063.0 C298.2 1061.7 292.8 1058.8 289.0 1055.0 C285.2 1051.2 281.3 1045.5 280.0 1040.0 C278.7 1034.5 278.7 1028.3 281.0 1022.0 C283.3 1015.7 293.0 1006.5 294.0 1002.0 C295.0 997.5 290.3 998.7 287.0 995.0 C283.7 991.3 276.7 984.8 274.0 980.0 C271.3 975.2 273.0 967.5 271.0 966.0 C269.0 964.5 266.8 969.0 262.0 971.0 C257.2 973.0 248.8 977.5 242.0 978.0 C235.2 978.5 226.3 976.5 221.0 974.0 C215.7 971.5 212.0 969.5 210.0 963.0 C208.0 956.5 208.5 942.5 209.0 935.0 C209.5 927.5 208.5 921.5 213.0 918.0 C217.5 914.5 230.5 915.7 236.0 914.0 C241.5 912.3 243.5 913.0 246.0 908.0 C248.5 903.0 249.2 891.0 251.0 884.0 C252.8 877.0 254.8 871.7 257.0 866.0 C259.2 860.3 263.2 859.7 264.0 850.0 C264.8 840.3 263.2 821.0 262.0 808.0 C260.8 795.0 257.7 780.5 257.0 772.0 C256.3 763.5 255.5 762.3 258.0 757.0Z" fill="#a07a78" stroke="#9ec488" stroke-width="10" stroke-linejoin="round"/>
<path d="M258.0 757.0 C260.5 751.7 266.5 743.3 272.0 740.0 C277.5 736.7 283.3 736.3 291.0 737.0 C298.7 737.7 309.0 740.2 318.0 744.0 C327.0 747.8 340.5 709.0 345.0 760.0 C349.5 811.0 349.5 999.5 345.0 1050.0 C340.5 1100.5 325.0 1060.8 318.0 1063.0 C311.0 1065.2 307.8 1064.3 303.0 1063.0 C298.2 1061.7 292.8 1058.8 289.0 1055.0 C285.2 1051.2 281.3 1045.5 280.0 1040.0 C278.7 1034.5 278.7 1028.3 281.0 1022.0 C283.3 1015.7 293.0 1006.5 294.0 1002.0 C295.0 997.5 290.3 998.7 287.0 995.0 C283.7 991.3 276.7 984.8 274.0 980.0 C271.3 975.2 273.0 967.5 271.0 966.0 C269.0 964.5 266.8 969.0 262.0 971.0 C257.2 973.0 248.8 977.5 242.0 978.0 C235.2 978.5 226.3 976.5 221.0 974.0 C215.7 971.5 212.0 969.5 210.0 963.0 C208.0 956.5 208.5 942.5 209.0 935.0 C209.5 927.5 208.5 921.5 213.0 918.0 C217.5 914.5 230.5 915.7 236.0 914.0 C241.5 912.3 243.5 913.0 246.0 908.0 C248.5 903.0 249.2 891.0 251.0 884.0 C252.8 877.0 254.8 871.7 257.0 866.0 C259.2 860.3 263.2 859.7 264.0 850.0 C264.8 840.3 263.2 821.0 262.0 808.0 C260.8 795.0 257.7 780.5 257.0 772.0 C256.3 763.5 255.5 762.3 258.0 757.0Z" fill="#a07a78" stroke="#b4b27c" stroke-width="5" stroke-linejoin="round"/>
<path d="M258.0 757.0 C260.5 751.7 266.5 743.3 272.0 740.0 C277.5 736.7 283.3 736.3 291.0 737.0 C298.7 737.7 309.0 740.2 318.0 744.0 C327.0 747.8 340.5 709.0 345.0 760.0 C349.5 811.0 349.5 999.5 345.0 1050.0 C340.5 1100.5 325.0 1060.8 318.0 1063.0 C311.0 1065.2 307.8 1064.3 303.0 1063.0 C298.2 1061.7 292.8 1058.8 289.0 1055.0 C285.2 1051.2 281.3 1045.5 280.0 1040.0 C278.7 1034.5 278.7 1028.3 281.0 1022.0 C283.3 1015.7 293.0 1006.5 294.0 1002.0 C295.0 997.5 290.3 998.7 287.0 995.0 C283.7 991.3 276.7 984.8 274.0 980.0 C271.3 975.2 273.0 967.5 271.0 966.0 C269.0 964.5 266.8 969.0 262.0 971.0 C257.2 973.0 248.8 977.5 242.0 978.0 C235.2 978.5 226.3 976.5 221.0 974.0 C215.7 971.5 212.0 969.5 210.0 963.0 C208.0 956.5 208.5 942.5 209.0 935.0 C209.5 927.5 208.5 921.5 213.0 918.0 C217.5 914.5 230.5 915.7 236.0 914.0 C241.5 912.3 243.5 913.0 246.0 908.0 C248.5 903.0 249.2 891.0 251.0 884.0 C252.8 877.0 254.8 871.7 257.0 866.0 C259.2 860.3 263.2 859.7 264.0 850.0 C264.8 840.3 263.2 821.0 262.0 808.0 C260.8 795.0 257.7 780.5 257.0 772.0 C256.3 763.5 255.5 762.3 258.0 757.0Z" fill="#a07a78" stroke="#a88a7a" stroke-width="2" stroke-linejoin="round"/></g>
</svg>
<div class="t" style="left:68.0px;top:593.6px;font-size:24px;color:rgba(130,90,90,0.15);font-weight:400;letter-spacing:7px">ЕВРОПА</div>
<div class="t" style="left:47.0px;top:937.5px;font-size:23px;color:#a09896;font-weight:400;letter-spacing:5.5px;-webkit-text-stroke:0.4px #a09896">АФРИКА</div>
<div class="t" style="left:307.0px;top:1031.5px;font-size:23px;color:#7889a3;font-weight:400;font-style:italic">Индийский</div>
<div class="t" style="left:333.0px;top:1056.5px;font-size:23px;color:#7889a3;font-weight:400;font-style:italic">океан</div>
</div>
<div class="abs" style="left:201px;top:600px;width:13px;height:260px;background:#a7b3ba;border-left:1.5px solid #96a0a6;border-right:1.5px solid #96a0a6"></div>
<div class="abs" style="left:181px;top:552px;width:54px;height:56px;background:#c5c5c5;border-radius:7px;box-shadow:0 1px 3px rgba(0,0,0,0.18)"></div>
<div class="abs" style="left:194px;top:577px;width:28px;height:6px;background:#8a8a8a"></div>
<div class="abs" style="left:205px;top:566px;width:6px;height:28px;background:#8a8a8a"></div>
<div class="abs" style="left:179px;top:854px;width:56px;height:28px;background:#c5c5c5;border-radius:7px;box-shadow:0 1px 3px rgba(0,0,0,0.18)"></div>
<div class="abs" style="left:196.8px;top:864px;width:2.0px;height:2px;background:#8a8a8a"></div>
<div class="abs" style="left:196.8px;top:869.6px;width:2.0px;height:2.0px;background:#8a8a8a"></div>
<div class="abs" style="left:203.0px;top:864px;width:2.0px;height:2px;background:#8a8a8a"></div>
<div class="abs" style="left:203.0px;top:869.6px;width:2.0px;height:2.0px;background:#8a8a8a"></div>
<div class="abs" style="left:209.20000000000002px;top:864px;width:2.0px;height:2px;background:#8a8a8a"></div>
<div class="abs" style="left:209.20000000000002px;top:869.6px;width:2.0px;height:2.0px;background:#8a8a8a"></div>
<div class="abs" style="left:215.4px;top:864px;width:2.0px;height:2px;background:#8a8a8a"></div>
<div class="abs" style="left:215.4px;top:869.6px;width:2.0px;height:2.0px;background:#8a8a8a"></div>
<div class="abs" style="left:181px;top:909px;width:54px;height:55px;background:#c5c5c5;border-radius:7px;box-shadow:0 1px 3px rgba(0,0,0,0.18)"></div>
<div class="abs" style="left:194px;top:932px;width:28px;height:8px;background:#8a8a8a"></div>
<div class="abs" style="left:1131px;top:248px;width:569px;height:1212px;background:#bfbfbf;border-radius:8px"></div>
<svg class="abs" style="left:0;top:0;width:2560px;height:1440px" viewBox="0 0 2560 1440"><path d="M1349 1205V1437M1459 1205V1430M1569 1205V1430M1680 1205V1430" stroke="#b1b1b1" stroke-width="1.5"/><path d="M1349 1430H1680" stroke="#aaaaaa" stroke-width="1.5"/></svg>
<div class="abs" style="left:1350px;top:1211.5px;width:23.59999999999991px;height:5.7999999999999545px;background:#7ba1c4"></div>
<div class="abs" style="left:1350px;top:1223.6px;width:23.59999999999991px;height:5.800000000000182px;background:#7ba1c4"></div>
<div class="abs" style="left:1350px;top:1402px;width:8px;height:6px;background:#7ba1c4"></div>
<div class="abs" style="left:1350px;top:1414px;width:8px;height:5.5px;background:#7ba1c4"></div>
<div class="abs" style="left:1350px;top:1428px;width:8px;height:5.5px;background:#7ba1c4"></div>
<div class="t" style="right:1240.0px;top:1216.5px;font-size:23px;color:#8c8c8c;font-weight:400;letter-spacing:1px">Ивановская о.</div>
<div class="t" style="right:1241.0px;top:1425.5px;font-size:23px;color:#8c8c8c;font-weight:400;letter-spacing:0.6px">Севастополь</div>
<div class="abs" style="left:885.5px;top:1226.5px;width:901.0px;height:172.5px;border:3.2px solid #3d5ec6;border-radius:24px;background:#c0c0c0"></div>
<svg class="abs" style="left:997.3px;top:1275.5px;width:31px;height:31px;color:#161616" viewBox="0 0 32 32"><use href="#bars"/></svg>
<svg class="abs" style="left:1214.0px;top:1276.0px;width:30px;height:30px;color:#161616" viewBox="0 0 32 32"><use href="#sliders"/></svg>
<svg class="abs" style="left:1430.5px;top:1277.0px;width:28px;height:28px;color:#161616" viewBox="0 0 32 32"><use href="#lines"/></svg>
<div class="t" style="left:1647.5px;top:1274.1px;font-size:34px;color:#161616;font-weight:400;transform:scaleX(0.8);transform-origin:0 0">H</div>
<div class="t" style="left:712.4px;width:600px;text-align:center;top:1319.5px;font-size:26px;color:#161616;font-weight:400;">Чарт</div>
<div class="t" style="left:928.0px;width:600px;text-align:center;top:1319.5px;font-size:26px;color:#161616;font-weight:400;">Селектор</div>
<div class="t" style="left:1144.0px;width:600px;text-align:center;top:1319.5px;font-size:26px;color:#161616;font-weight:400;">Текст</div>
<div class="t" style="left:1359.5px;width:600px;text-align:center;top:1319.5px;font-size:26px;color:#161616;font-weight:400;">Заголовок</div>
<div class="abs" style="left:111px;top:3px;width:2446px;height:76px;background:#c0c0c0;border-bottom:1.5px solid #adadad"></div>
<div class="t" style="left:161.0px;top:25.9px;font-size:26px;color:#6b6b6b;font-weight:400;letter-spacing:0.33px">Коллекции и воркбуки</div>
<div class="t" style="left:442.0px;top:25.9px;font-size:26px;color:#6b6b6b;font-weight:400;">/</div>
<div class="t" style="left:462.0px;top:25.9px;font-size:26px;color:#6b6b6b;font-weight:400;letter-spacing:0.3px">Практические руководства</div>
<div class="t" style="left:801.0px;top:25.9px;font-size:26px;color:#6b6b6b;font-weight:400;">/</div>
<div class="t" style="left:820.0px;top:25.9px;font-size:26px;color:#161616;font-weight:400;letter-spacing:-0.6px">ДТП в РФ</div>
<svg class="abs" style="left:955.3px;top:19.8px;width:31.4px;height:31.4px;color:#6b6b6b" viewBox="0 0 32 32"><use href="#star"/></svg>
<svg class="abs" style="left:1021.0px;top:22.0px;width:32px;height:32px;color:#6b6b6b" viewBox="0 0 32 32"><use href="#dots"/></svg>
<svg class="abs" style="left:1657.0px;top:22.0px;width:34px;height:34px;color:#171717" viewBox="0 0 32 32"><use href="#gear"/></svg>
<svg class="abs" style="left:1727.1px;top:21.9px;width:35px;height:35px;color:#171717" viewBox="0 0 32 32"><use href="#info"/></svg>
<div class="abs" style="left:1789px;top:11px;width:121px;height:56px;background:#b4b4b4;border-radius:11px"></div>
<div class="t" style="left:1815.0px;top:25.9px;font-size:26px;color:#161616;font-weight:400;">Связи</div>
<div class="abs" style="left:1926px;top:11px;width:151px;height:56px;background:#b4b4b4;border-radius:11px"></div>
<div class="t" style="left:1952.0px;top:25.9px;font-size:26px;color:#161616;font-weight:400;">Вкладки</div>
<div class="abs" style="left:2093px;top:11px;width:169px;height:56px;border:1.5px solid #a9a9a9;border-radius:11px"></div>
<div class="t" style="left:2119.0px;top:25.9px;font-size:26px;color:#161616;font-weight:400;">Отменить</div>
<div class="abs" style="left:2278px;top:11px;width:178px;height:56px;background:#b4b4b4;border-radius:11px"></div>
<div class="t" style="left:2303.0px;top:25.9px;font-size:26px;color:#878787;font-weight:400;">Сохранить</div>
<div class="abs" style="left:2464px;top:11px;width:56px;height:56px;background:#3e62c6;border-radius:11px"></div>
<svg class="abs" style="left:2478.0px;top:25.0px;width:28px;height:28px;color:#e6e6e6" viewBox="0 0 32 32"><use href="#chev"/></svg>
<div class="abs" style="left:3px;top:3px;width:109px;height:1434px;background:#c0c0c0;border-right:1.5px solid #adadad"></div>
<svg class="abs" style="left:3px;top:3px;width:109px;height:220px" viewBox="0 0 109 220"><path d="M0 0H109V216C100 210 92 205 84.5 203C70 199.5 50 195.5 28 190C15 186.5 3 181 0 170.7Z" fill="#aab0c0"/><path d="M108.3 0V216" stroke="#9ea5b6" stroke-width="1.5"/></svg>
<div class="abs" style="left:3px;top:1398px;width:107.5px;height:1.5px;background:#adadad"></div>
<svg class="abs" style="left:23.8px;top:23.8px;width:64px;height:64px" viewBox="0 0 64 64">
<defs><linearGradient id="lg" x1="0" x2="1" y1="0" y2="0"><stop offset="0" stop-color="#acb0bb"/><stop offset="0.55" stop-color="#c1c1c1"/><stop offset="1" stop-color="#c6c6c6"/></linearGradient>
<clipPath id="lc"><circle cx="32" cy="32" r="32"/></clipPath></defs>
<circle cx="32" cy="32" r="32" fill="#3d5fc6"/>
<g clip-path="url(#lc)"><circle cx="24.4" cy="32.1" r="28.4" fill="url(#lg)"/>
<path d="M-2 21.6C22 20.5 38 22 45.5 27C50 30 50 34.6 45.5 37.6C38 42.6 22 44 -2 43.2Z" fill="#3d5fc6"/></g>
</svg>
<div class="abs" style="left:41.3px;top:121.3px;width:7.4px;height:7.4px;border-radius:50%;background:#141414"></div>
<div class="abs" style="left:41.3px;top:132.60000000000002px;width:7.4px;height:7.4px;border-radius:50%;background:#141414"></div>
<div class="abs" style="left:41.3px;top:143.8px;width:7.4px;height:7.4px;border-radius:50%;background:#141414"></div>
<div class="abs" style="left:52.599999999999994px;top:121.3px;width:7.4px;height:7.4px;border-radius:50%;background:#141414"></div>
<div class="abs" style="left:52.599999999999994px;top:132.60000000000002px;width:7.4px;height:7.4px;border-radius:50%;background:#141414"></div>
<div class="abs" style="left:52.599999999999994px;top:143.8px;width:7.4px;height:7.4px;border-radius:50%;background:#141414"></div>
<div class="abs" style="left:63.8px;top:121.3px;width:7.4px;height:7.4px;border-radius:50%;background:#141414"></div>
<div class="abs" style="left:63.8px;top:132.60000000000002px;width:7.4px;height:7.4px;border-radius:50%;background:#141414"></div>
<div class="abs" style="left:63.8px;top:143.8px;width:7.4px;height:7.4px;border-radius:50%;background:#141414"></div>
<svg class="abs" style="left:39.5px;top:244.0px;width:33px;height:33px;color:#4d5b6b" viewBox="0 0 32 32"><use href="#grid4"/></svg>
<svg class="abs" style="left:39.0px;top:323.0px;width:34px;height:34px;color:#4d5b6b" viewBox="0 0 32 32"><use href="#folders"/></svg>
<svg class="abs" style="left:38.5px;top:400.0px;width:35px;height:35px;color:#4d5b6b" viewBox="0 0 32 32"><use href="#star"/></svg>
<svg class="abs" style="left:39.5px;top:482.0px;width:34px;height:34px;color:#4d5b6b" viewBox="0 0 32 32"><use href="#bolt"/></svg>
<svg class="abs" style="left:39.0px;top:562.0px;width:34px;height:34px;color:#4d5b6b" viewBox="0 0 32 32"><use href="#circles"/></svg>
<svg class="abs" style="left:39.5px;top:643.0px;width:33px;height:33px;color:#4d5b6b" viewBox="0 0 32 32"><use href="#bars"/></svg>
<svg class="abs" style="left:40.5px;top:723.5px;width:31px;height:31px;color:#4d5b6b" viewBox="0 0 32 32"><use href="#table"/></svg>
<svg class="abs" style="left:40.5px;top:803.5px;width:31px;height:31px;color:#4d5b6b" viewBox="0 0 32 32"><use href="#monitor"/></svg>
<svg class="abs" style="left:39.5px;top:882.5px;width:33px;height:33px;color:#4d5b6b" viewBox="0 0 32 32"><use href="#folderhome"/></svg>
<svg class="abs" style="left:39.5px;top:962.5px;width:33px;height:33px;color:#4d5b6b" viewBox="0 0 32 32"><use href="#dots"/></svg>
<svg class="abs" style="left:41.0px;top:1086.5px;width:31px;height:31px;color:#141414" viewBox="0 0 32 32"><use href="#bell"/></svg>
<svg class="abs" style="left:39.0px;top:1165.5px;width:34px;height:34px;color:#141414" viewBox="0 0 32 32"><use href="#help"/></svg>
<svg class="abs" style="left:39.5px;top:1246.1px;width:33px;height:33px;color:#141414" viewBox="0 0 32 32"><use href="#gear"/></svg>
<svg class="abs" style="left:46px;top:1410.5px;width:18px;height:18px" viewBox="0 0 18 18"><path d="M0 0L18 9L0 18Z" fill="#5f5f5f"/></svg>
<div class="abs" style="left:320px;top:237px;width:1920px;height:968px;background:#fff;border-radius:8px"></div>
<div class="abs" style="left:320px;top:237px;width:510px;height:968px;background:#f9f9f9;border-radius:8px 0 0 8px"></div>
<div class="t" style="left:369.6px;top:283.3px;font-size:34px;color:#1f1f1f;font-weight:400;-webkit-text-stroke:0.9px #1f1f1f">Чарт</div>
<div class="abs" style="left:320px;top:424px;width:510px;height:80px;background:#e0e7fb"></div>
<div class="abs" style="left:374.4px;top:375.0px;width:5px;height:5px;border-radius:50%;background:#bdbdbd"></div>
<div class="abs" style="left:374.4px;top:382.2px;width:5px;height:5px;border-radius:50%;background:#bdbdbd"></div>
<div class="abs" style="left:374.4px;top:389.4px;width:5px;height:5px;border-radius:50%;background:#bdbdbd"></div>
<div class="abs" style="left:381.0px;top:375.0px;width:5px;height:5px;border-radius:50%;background:#bdbdbd"></div>
<div class="abs" style="left:381.0px;top:382.2px;width:5px;height:5px;border-radius:50%;background:#bdbdbd"></div>
<div class="abs" style="left:381.0px;top:389.4px;width:5px;height:5px;border-radius:50%;background:#bdbdbd"></div>
<svg class="abs" style="left:412.3px;top:366.3px;width:32.4px;height:32.4px;color:#56677a" viewBox="0 0 32 32"><use href="#starf"/></svg>
<div class="t" style="left:473.0px;top:370.8px;font-size:26px;color:#1f1f1f;font-weight:400;letter-spacing:-0.3px">Тепловая карта ДТП</div>
<div class="abs" style="left:374.4px;top:454.3px;width:5px;height:5px;border-radius:50%;background:#bdbdbd"></div>
<div class="abs" style="left:374.4px;top:461.5px;width:5px;height:5px;border-radius:50%;background:#bdbdbd"></div>
<div class="abs" style="left:374.4px;top:468.7px;width:5px;height:5px;border-radius:50%;background:#bdbdbd"></div>
<div class="abs" style="left:381.0px;top:454.3px;width:5px;height:5px;border-radius:50%;background:#bdbdbd"></div>
<div class="abs" style="left:381.0px;top:461.5px;width:5px;height:5px;border-radius:50%;background:#bdbdbd"></div>
<div class="abs" style="left:381.0px;top:468.7px;width:5px;height:5px;border-radius:50%;background:#bdbdbd"></div>
<svg class="abs" style="left:412.3px;top:446.3px;width:32.4px;height:32.4px;color:#6b6b6b" viewBox="0 0 32 32"><use href="#star"/></svg>
<div class="t" style="left:473.0px;top:449.9px;font-size:26px;color:#1f1f1f;font-weight:400;">Карта регионов</div>
<svg class="abs" style="left:384.2px;top:531.8px;width:25px;height:25px;color:#7a7a7a" viewBox="0 0 32 32"><use href="#plus"/></svg>
<div class="t" style="left:429.0px;top:529.5px;font-size:26px;color:#7a7a7a;font-weight:400;">Добавить</div>
<svg class="abs" style="left:2164.0px;top:287.0px;width:26px;height:26px;color:#222" viewBox="0 0 32 32"><use href="#close"/></svg>
<div class="t" style="left:878.7px;top:399.6px;font-size:26px;color:#222;font-weight:400;">Название</div>
<div class="t" style="left:878.7px;top:479.3px;font-size:26px;color:#222;font-weight:400;">Чарт</div>
<div class="t" style="left:878.7px;top:638.9px;font-size:26px;color:#222;font-weight:400;">Описание</div>
<div class="t" style="left:879.3px;top:799.9px;font-size:26px;color:#222;font-weight:400;">Автовысота</div>
<div class="t" style="left:878.6px;top:880.3px;font-size:26px;color:#222;font-weight:400;">Фильтрация</div>
<svg class="abs" style="left:1033.5px;top:798.3px;width:29px;height:29px;color:#b0b0b0" viewBox="0 0 32 32"><use href="#help"/></svg>
<svg class="abs" style="left:1038.3px;top:878.5px;width:29px;height:29px;color:#b0b0b0" viewBox="0 0 32 32"><use href="#help"/></svg>
<div class="abs" style="left:1158.5px;top:384.2px;width:658.5px;height:55.19999999999999px;border:1.5px solid #dedede;border-radius:8px"></div>
<div class="t" style="left:1176.4px;top:399.6px;font-size:26px;color:#222;font-weight:400;">Карта регионов</div>
<div class="abs" style="left:1158.5px;top:464.4px;width:658.5px;height:55.200000000000045px;border:1.5px solid #dedede;border-radius:8px"></div>
<div class="abs" style="left:1182.2px;top:473.7px;width:35.200000000000045px;height:36.30000000000001px;background:#5282ff;border-radius:6px"></div>
<svg class="abs" style="left:1188px;top:480px;width:24px;height:24px;color:#fff" viewBox="0 0 32 32"><use href="#bars"/></svg>
<div class="t" style="left:1235.0px;top:479.3px;font-size:26px;color:#222;font-weight:400;">Карта регионов</div>
<div class="abs" style="left:1838px;top:464px;width:152.29999999999995px;height:55.799999999999955px;background:#f2f2f2;border-radius:10px"></div>
<div class="t" style="left:1862.8px;top:479.8px;font-size:26px;color:#222;font-weight:400;">Открыть</div>
<div class="abs" style="left:1159.3px;top:544.5px;width:230.29999999999995px;height:54.700000000000045px;border:1.5px solid #dedede;border-radius:8px"></div>
<div class="t" style="left:1183.4px;top:558.9px;font-size:26px;color:#222;font-weight:400;">Указать ссылку</div>
<div class="abs" style="left:1158.5px;top:624.7px;width:658.5px;height:134.5px;border:1.5px solid #dedede;border-radius:8px"></div>
<div class="t" style="left:1176.4px;top:637.9px;font-size:26px;color:#a8a8a8;font-weight:400;">Введите описание</div>
<div class="abs" style="left:1158.4px;top:797.4px;width:26.699999999999818px;height:27.600000000000023px;background:#ebebeb;border-radius:6px"></div>
<div class="t" style="left:1196.8px;top:797.1px;font-size:26px;color:#8a8a8a;font-weight:400;">Включить</div>
<div class="abs" style="left:1158.4px;top:878.5px;width:26.699999999999818px;height:27.0px;border:1.5px solid #d2d2d2;border-radius:6px;background:#fff"></div>
<div class="t" style="left:1196.8px;top:878.4px;font-size:26px;color:#222;font-weight:400;">Включить</div>
<svg class="abs" style="left:883.2px;top:981.7px;width:30px;height:30px;color:#222" viewBox="0 0 32 32"><use href="#chev"/></svg>
<div class="t" style="left:936.2px;top:979.7px;font-size:34px;color:#222;font-weight:400;-webkit-text-stroke:0.9px #222;letter-spacing:0.1px">Параметры</div>
<div class="t" style="left:1728.4px;top:1099.8px;font-size:26px;color:#222;font-weight:400;">Отменить</div>
<div class="abs" style="left:1935.8px;top:1076.8px;width:256.0000000000002px;height:71.79999999999995px;background:#5282ff;border-radius:14px"></div>
<div class="t" style="left:2000.0px;top:1100.2px;font-size:26px;color:#fff;font-weight:400;-webkit-text-stroke:0.5px #fff">Сохранить</div>
<div class="abs" style="left:0px;top:0px;width:2560px;height:3px;background:#cecece"></div>
<div class="abs" style="left:0px;top:1437px;width:2560px;height:3px;background:#cecece"></div>
<div class="abs" style="left:0px;top:0px;width:3px;height:1440px;background:#cecece"></div>
<div class="abs" style="left:2557px;top:0px;width:3px;height:1440px;background:#cecece"></div></body></html>
